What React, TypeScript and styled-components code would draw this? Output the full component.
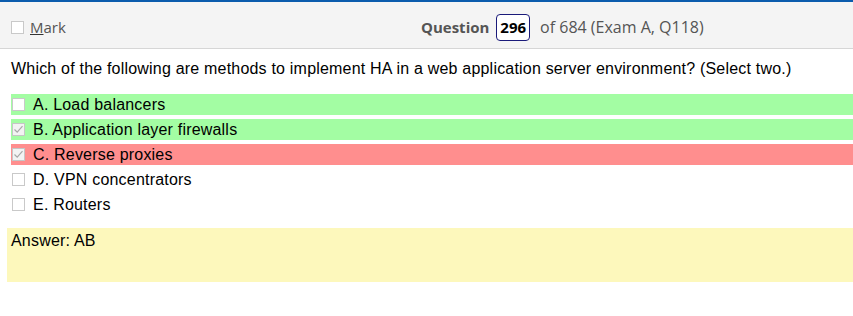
import React from 'react';
import styled, { createGlobalStyle } from 'styled-components';

const GlobalStyle = createGlobalStyle`
  html, body {
    margin: 0;
    padding: 0;
    background: #ffffff;
  }
  body {
    font-family: 'Liberation Sans', Arial, sans-serif;
  }
`;

const HeaderBar = styled.div`
  display: flex;
  align-items: center;
  height: 42px;
  padding: 4px 0 0 11px;
  background: #f4f4f4;
  border-top: 2px solid #0b5cad;
  border-bottom: 1px solid #d6d6d6;
  font-family: 'Open Sans', 'Noto Sans', sans-serif;
  font-size: 15px;
  color: #555555;
`;

const MarkLabel = styled.label`
  display: flex;
  align-items: center;
  gap: 6px;
  width: 410px;
  cursor: pointer;

  u {
    text-decoration-color: #333;
  }
`;

const QuestionInfo = styled.div`
  display: flex;
  align-items: center;
`;

const QuestionWord = styled.span`
  font-weight: 700;
`;

const ExamInfo = styled.span`
  font-size: 16px;
`;

const NumberBox = styled.span`
  display: inline-block;
  margin: 0 10px 0 7px;
  padding: 1px 3px;
  height: 23px;
  line-height: 23px;
  border: 1px solid #1a1a7a;
  border-radius: 4px;
  background: #ffffff;
  color: #000000;
  font-weight: 700;
`;

const Box = styled.span<{ $checked?: boolean }>`
  display: inline-flex;
  align-items: center;
  justify-content: center;
  box-sizing: border-box;
  width: 13px;
  height: 13px;
  flex: none;
  border: 1px solid ${(p) => (p.$checked ? '#c6c6c6' : '#c9c9c9')};
  background: ${(p) => (p.$checked ? '#f3f3f3' : '#ffffff')};
`;

const Content = styled.div`
  padding: 11px 0 0 7px;
  letter-spacing: 0.2px;
`;

const QuestionText = styled.p`
  margin: 0 0 16px 4px;
  font-size: 16px;
  line-height: 18px;
  color: #000000;
`;

const OptionList = styled.div`
  display: flex;
  flex-direction: column;
  gap: 4px;
  margin-left: 4px;
`;

const Option = styled.div<{ $state?: 'right' | 'wrong' }>`
  display: flex;
  align-items: center;
  gap: 8px;
  height: 21px;
  padding-left: 1px;
  font-size: 16px;
  color: #000000;
  background: ${(p) =>
    p.$state === 'right' ? '#a3fda3' : p.$state === 'wrong' ? '#ff8e8e' : 'transparent'};
`;

const AnswerBox = styled.div`
  margin-top: 13px;
  height: 54px;
  box-sizing: border-box;
  padding: 4px 4px;
  background: #fdf8bc;
  font-size: 16px;
  line-height: 18px;
  color: #000000;
`;

const Check = () => (
  <svg width="11" height="11" viewBox="0 0 11 11">
    <path d="M1.5 5.5 L4.2 8.2 L9.5 2.2" fill="none" stroke="#a8a8a8" strokeWidth="1.2" />
  </svg>
);

const options = [
  { key: 'A', text: 'Load balancers', checked: false, state: 'right' as const },
  { key: 'B', text: 'Application layer firewalls', checked: true, state: 'right' as const },
  { key: 'C', text: 'Reverse proxies', checked: true, state: 'wrong' as const },
  { key: 'D', text: 'VPN concentrators', checked: false },
  { key: 'E', text: 'Routers', checked: false },
];

const App: React.FC = () => {
  return (
    <>
      <GlobalStyle />
      <HeaderBar>
        <MarkLabel>
          <Box />
          <span>
            <u>M</u>ark
          </span>
        </MarkLabel>
        <QuestionInfo>
          <QuestionWord>Question</QuestionWord>
          <NumberBox>296</NumberBox>
          <ExamInfo>of 684 (Exam A, Q118)</ExamInfo>
        </QuestionInfo>
      </HeaderBar>
      <Content>
        <QuestionText>
          Which of the following are methods to implement HA in a web application server environment? (Select two.)
        </QuestionText>
        <OptionList>
          {options.map((o) => (
            <Option key={o.key} $state={o.state}>
              <Box $checked={o.checked}>{o.checked && <Check />}</Box>
              <span>
                {o.key}. {o.text}
              </span>
            </Option>
          ))}
        </OptionList>
        <AnswerBox>Answer: AB</AnswerBox>
      </Content>
    </>
  );
};

export default App;
